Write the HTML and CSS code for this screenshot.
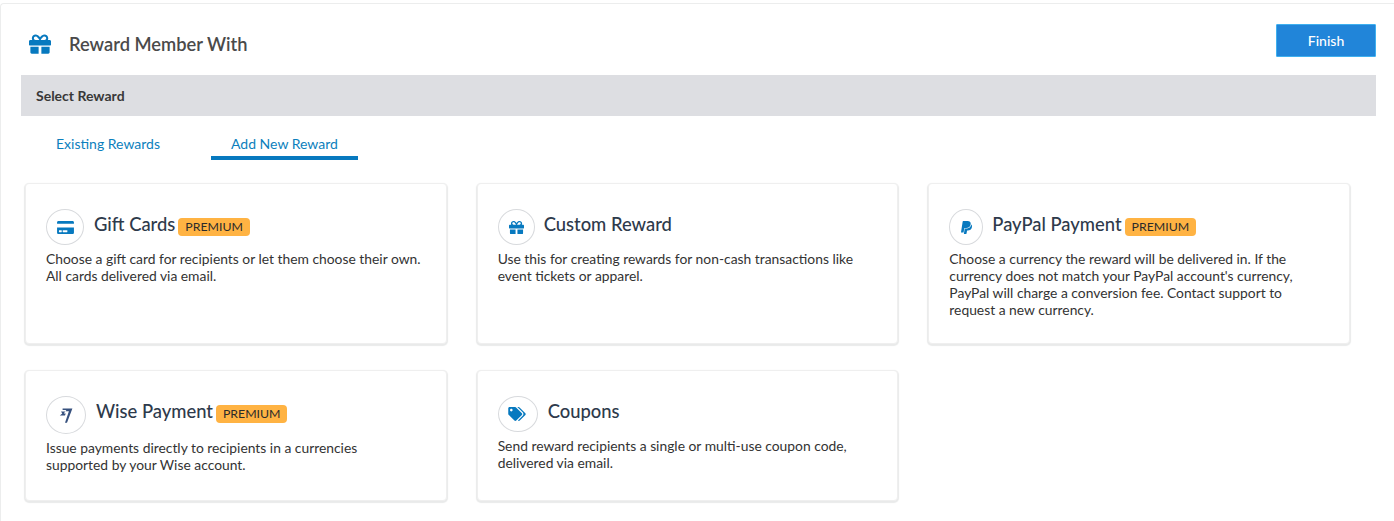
FILE: index.html
```html
<!DOCTYPE html>
<html lang="en">
<head>
<meta charset="utf-8">
<title>Reward Member With</title>
<link rel="stylesheet" href="styles.css">
</head>
<body>
<main class="panel">
  <header class="head">
    <svg class="head-icon" viewBox="0 0 512 512"><path d="M32 448c0 17.7 14.3 32 32 32h160V320H32v128zm256 32h160c17.7 0 32-14.3 32-32V320H288v160zm192-320h-42.1c6.2-12.1 10.1-25.5 10.1-40 0-48.5-39.5-88-88-88-41.6 0-68.5 21.3-103 68.3-34.5-47-61.4-68.3-103-68.3-48.5 0-88 39.5-88 88 0 14.5 3.8 27.9 10.1 40H32c-17.7 0-32 14.3-32 32v80c0 8.8 7.2 16 16 16h480c8.8 0 16-7.2 16-16v-80c0-17.7-14.3-32-32-32zm-326.1 0c-22.1 0-40-17.9-40-40s17.9-40 40-40c19.9 0 34.6 3.3 86.1 80h-86.1zm206.1 0h-87.6c51.4-76.5 65.7-80 87.6-80 22.1 0 40 17.9 40 40s-17.9 40-40 40z"/></svg>
    <h1 class="head-title">Reward Member With</h1>
    <button class="finish" type="button">Finish</button>
  </header>
  <div class="bar">Select Reward</div>
  <nav class="tabs">
    <a class="tab">Existing Rewards</a>
    <a class="tab tab-active">Add New Reward</a>
  </nav>
  <section class="grid">
    <article class="card">
      <div class="card-head">
        <span class="circle c-gift"><svg class="ico ico-card" viewBox="0 0 576 512"><path d="M0 432c0 26.5 21.5 48 48 48h480c26.5 0 48-21.5 48-48V256H0v176zm192-68c0-6.6 5.4-12 12-12h136c6.6 0 12 5.4 12 12v40c0 6.6-5.4 12-12 12H204c-6.6 0-12-5.4-12-12v-40zm-128 0c0-6.6 5.4-12 12-12h72c6.6 0 12 5.4 12 12v40c0 6.6-5.4 12-12 12H76c-6.6 0-12-5.4-12-12v-40zM576 80v48H0V80c0-26.5 21.5-48 48-48h480c26.5 0 48 21.5 48 48z"/></svg></span>
        <h2 class="card-title">Gift Cards</h2>
        <span class="badge">PREMIUM</span>
      </div>
      <p class="desc">Choose a gift card for recipients or let them choose their own. All cards delivered via email.</p>
    </article>
    <article class="card">
      <div class="card-head">
        <span class="circle c-custom"><svg class="ico ico-gift" viewBox="0 0 512 512"><path d="M32 448c0 17.7 14.3 32 32 32h160V320H32v128zm256 32h160c17.7 0 32-14.3 32-32V320H288v160zm192-320h-42.1c6.2-12.1 10.1-25.5 10.1-40 0-48.5-39.5-88-88-88-41.6 0-68.5 21.3-103 68.3-34.5-47-61.4-68.3-103-68.3-48.5 0-88 39.5-88 88 0 14.5 3.8 27.9 10.1 40H32c-17.7 0-32 14.3-32 32v80c0 8.8 7.2 16 16 16h480c8.8 0 16-7.2 16-16v-80c0-17.7-14.3-32-32-32zm-326.1 0c-22.1 0-40-17.9-40-40s17.9-40 40-40c19.9 0 34.6 3.3 86.1 80h-86.1zm206.1 0h-87.6c51.4-76.5 65.7-80 87.6-80 22.1 0 40 17.9 40 40s-17.9 40-40 40z"/></svg></span>
        <h2 class="card-title">Custom Reward</h2>
      </div>
      <p class="desc">Use this for creating rewards for non-cash transactions like event tickets or apparel.</p>
    </article>
    <article class="card">
      <div class="card-head">
        <span class="circle c-paypal"><svg class="ico ico-paypal" viewBox="0 0 384 512"><path d="M111.4 295.9c-3.5 19.2-17.4 108.7-21.5 134-.3 1.8-1 2.5-3 2.5H12.3c-7.6 0-13.1-6.6-12.1-13.9L58.8 46.6c1.5-9.6 10.1-16.9 20-16.9 152.3 0 165.1-3.7 204 11.4 60.1 23.3 65.6 79.5 44 140.3-21.5 62.6-72.5 89.5-140.1 90.3-43.4.7-69.5-7-75.3 24.2zM357.1 152c-1.8-1.3-2.5-1.8-3 1.3-2 11.4-5.1 22.5-8.8 33.6-39.9 113.8-150.5 103.9-204.5 103.9-6.1 0-10.1 3.3-10.9 9.4-22.6 140.4-27.1 169.7-27.1 169.7-1 7.1 3.5 12.9 10.6 12.9h63.5c8.6 0 15.7-6.3 17.4-14.9.7-5.4-1.1 6.1 14.4-91.3 4.6-22 14.3-19.7 29.3-19.7 71 0 126.4-28.8 142.9-112.3 6.5-34.8 4.6-71.4-23.8-92.6z"/></svg></span>
        <h2 class="card-title">PayPal Payment</h2>
        <span class="badge">PREMIUM</span>
      </div>
      <p class="desc">Choose a currency the reward will be delivered in. If the currency does not match your PayPal account's currency, PayPal will charge a conversion fee. Contact support to request a new currency.</p>
    </article>
    <article class="card card-low">
      <div class="card-head">
        <span class="circle c-wise"><svg class="ico ico-wise" viewBox="0 0 14 15"><path d="M3.6 0.6h9.8L8 14.8H6l3.9-11.6H6.4l1-1.1H3.6zM2 3.6h4.2L4.8 5.4h1.9L6 7.4H0.8L3.3 5.4z"/></svg></span>
        <h2 class="card-title">Wise Payment</h2>
        <span class="badge">PREMIUM</span>
      </div>
      <p class="desc">Issue payments directly to recipients in a currencies supported by your Wise account.</p>
    </article>
    <article class="card card-low">
      <div class="card-head">
        <span class="circle c-coupon"><svg class="ico ico-tags" viewBox="0 0 640 512"><path d="M497.941 225.941L286.059 14.059A48 48 0 0 0 252.118 0H48C21.49 0 0 21.49 0 48v204.118a48 48 0 0 0 14.059 33.941l211.882 211.882c18.744 18.745 49.136 18.746 67.882 0l204.118-204.118c18.745-18.745 18.745-49.137 0-67.882zM112 160c-26.51 0-48-21.49-48-48s21.49-48 48-48 48 21.49 48 48-21.49 48-48 48zm513.941 133.823L421.823 497.941c-18.745 18.745-49.137 18.745-67.882 0l-.36-.36L527.64 323.522c16.999-16.999 26.36-39.6 26.36-63.64s-9.362-46.641-26.36-63.64L331.397 0h48.721a48 48 0 0 1 33.941 14.059l211.882 211.882c18.745 18.745 18.745 49.137 0 67.882z"/></svg></span>
        <h2 class="card-title">Coupons</h2>
      </div>
      <p class="desc">Send reward recipients a single or multi-use coupon code, delivered via email.</p>
    </article>
  </section>
</main>
</body>
</html>
```

FILE: styles.css
```css
* { box-sizing: border-box; }
html, body { margin: 0; height: 521px; overflow: hidden; background: #fff; }
body { font-family: Lato, "Noto Sans", sans-serif; color: #333; }

.panel {
  margin-top: 3px;
  height: 518px;
  padding: 0 18px 0 20px;
  border-top: 1px solid #eceded;
  border-left: 1px solid #eceded;
  border-top-left-radius: 4px;
  overflow: hidden;
}

.head { display: flex; align-items: center; height: 71px; padding-top: 9px; }
.head-icon { width: 22px; height: 22px; margin-left: 8px; fill: #0779bf; flex: none; }
.head-title { margin: 0 0 0 18px; font-size: 18.3px; font-weight: 600; color: #4a4a4a; }
.finish {
  margin-left: auto;
  margin-bottom: 7px;
  width: 100px;
  height: 33px;
  background: #2185d9;
  border: 1px solid #3fb0ef;
  border-radius: 1px;
  color: #fff;
  font: 500 14px Lato, sans-serif;
}

.bar {
  height: 41px;
  display: flex;
  align-items: center;
  padding-left: 15px;
  background: #dddee2;
  font-size: 14px;
  font-weight: 700;
  color: #383838;
}

.tabs { display: flex; gap: 31px; padding-left: 15px; height: 44px; }
.tab {
  display: flex;
  align-items: center;
  padding: 14px 20px 0;
  font-size: 14px;
  color: #0c7fbd;
  border-bottom: 4px solid transparent;
}
.tab-active { border-bottom-color: #0779bf; }

.grid {
  display: grid;
  grid-template-columns: repeat(3, 1fr);
  column-gap: 30px;
  row-gap: 26px;
  margin-top: 23px;
  padding-left: 4px;
  padding-right: 26px;
}

.card {
  height: 161px;
  padding: 25px 24px 0 20px;
  background: #fff;
  border: 1px solid #efefef;
  border-radius: 4px;
  box-shadow: 0 1px 1px 1px #e9eaea;
}
.card-low { height: 131px; }

.card-head { display: flex; align-items: flex-start; }
.circle {
  flex: none;
  display: flex;
  align-items: center;
  justify-content: center;
  height: 36px;
  border: 1px solid #d8dadd;
  border-radius: 50%;
}
.c-gift { width: 38px; margin-right: 10px; }
.c-custom { width: 37px; margin-right: 9px; }
.c-paypal { width: 34px; margin-right: 9px; }
.c-wise { width: 40px; height: 38px; margin-right: 10px; }
.c-coupon { width: 40px; margin-right: 10px; }

.ico { display: block; }
.ico-card { width: 17px; height: 15px; fill: #0779bf; }
.ico-gift { width: 15px; height: 15px; fill: #0779bf; }
.ico-paypal { width: 11px; height: 15px; fill: #0779bf; }
.ico-wise { width: 14px; height: 15px; fill: #37517e; }
.ico-tags { width: 18px; height: 14px; margin-right: 2px; fill: #0779bf; }

.card-title { margin: 4px 0 0; font-size: 18.4px; line-height: 22px; font-weight: 500; color: #2e3a4b; white-space: nowrap; }
.badge {
  margin: 9px 0 0 3px;
  padding: 0 7px;
  height: 18px;
  line-height: 18px;
  background: #ffb343;
  border-radius: 4px;
  font-size: 12.3px;
  color: #2b2b2b;
}
.desc { margin: 5px 0 0; font-size: 13.85px; line-height: 17px; color: #333; }
```
